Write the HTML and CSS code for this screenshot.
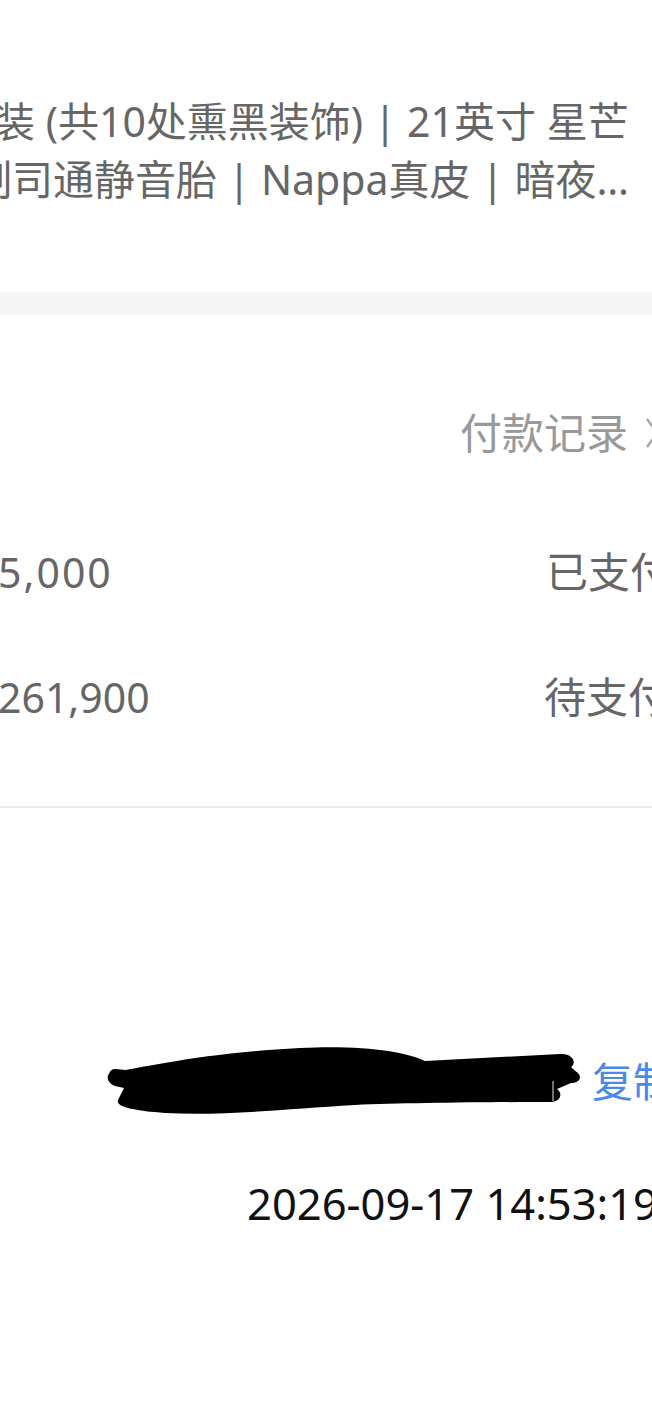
FILE: index.html
```html
<!DOCTYPE html>
<html lang="zh-CN">
<head>
<meta charset="utf-8">
<title>订单详情</title>
<link rel="stylesheet" href="styles.css">
</head>
<body>
<div class="page">
  <section class="desc">
    <div class="desc-line l1">装 (共10处熏黑装饰) | 21英寸 星芒</div>
    <div class="desc-line l2">制司通静音胎 | Nappa真皮 | 暗夜…</div>
  </section>

  <div class="band"></div>

  <section class="payments">
    <div class="record-row">
      <span class="record-link">付款记录</span>
      <svg class="chev" width="14" height="32" viewBox="0 0 14 32"><polyline points="2,2 12,16 2,30" fill="none" stroke="#a6a6a6" stroke-width="2.4"/></svg>
    </div>
    <div class="pay-row paid">
      <span class="amt">5,000</span>
      <span class="status">已支付</span>
    </div>
    <div class="pay-row pending">
      <span class="amt">261,900</span>
      <span class="status">待支付</span>
    </div>
  </section>

  <div class="divider"></div>

  <section class="order">
    <div class="copy-row">
      <svg class="redact" width="480" height="72" viewBox="0 0 480 72">
        <path d="M5,28 C40,22 100,8 195,3 C255,0 300,6 320,16 L455,9 C468,8 472,18 466,22 L470,26 C478,30 476,38 466,38 L452,44 C458,48 456,57 446,57 C380,57 300,58 250,60 C180,64 120,71 60,68 C30,66 10,62 13,55 L19,43 L10,41 C2,38 1,30 5,28 Z" fill="#000"/>
        <path d="M10,30 C80,38 300,33 466,30" stroke="#000" stroke-width="12" stroke-linecap="round" fill="none"/>
        <line x1="448" y1="36" x2="448" y2="56" stroke="#9a9a9a" stroke-width="1.5"/>
      </svg>
      <span class="copy">复制</span>
    </div>
    <div class="date">2026-09-17 14:53:19</div>
  </section>
</div>
</body>
</html>
```

FILE: styles.css
```css
html, body {
  margin: 0;
  padding: 0;
  background: #ffffff;
}
body {
  width: 652px;
  height: 1414px;
  overflow: hidden;
  font-family: "Noto Sans", "Noto Sans CJK SC", sans-serif;
}
.page {
  padding-top: 92px;
}
.desc {
  color: #666666;
  font-size: 41px;
  line-height: 58px;
}
.desc-line {
  white-space: nowrap;
}
.l1 {
  margin-left: -6px;
}
.l2 {
  margin-left: -29px;
}
.band {
  margin-top: 84px;
  height: 23px;
  background: #f5f5f5;
}
.payments {
  padding-top: 89px;
}
.record-row {
  display: flex;
  align-items: center;
  padding-left: 460px;
  height: 58px;
  white-space: nowrap;
}
.record-link {
  color: #999999;
  font-size: 42px;
  line-height: 58px;
}
.chev {
  margin-left: 17px;
  flex: none;
}
.pay-row {
  display: grid;
  grid-template-columns: 546px auto;
  font-size: 41px;
  line-height: 58px;
  color: #666666;
  white-space: nowrap;
}
.paid {
  margin-top: 81px;
}
.pending {
  margin-top: 67px;
}
.amt {
  margin-left: -2px;
}
.paid .amt {
  letter-spacing: 2px;
}
.status {
  font-size: 42px;
}
.pending .status {
  margin-left: -2px;
}
.divider {
  margin-top: 80px;
  height: 2px;
  background: #e9e9e9;
}
.order {
  padding-top: 237px;
}
.copy-row {
  display: flex;
  align-items: center;
  height: 72px;
  padding-left: 105px;
  white-space: nowrap;
}
.redact {
  flex: none;
}
.copy {
  margin-left: 7px;
  color: #4a8ae6;
  font-size: 41px;
  line-height: 58px;
}
.date {
  margin-top: 57px;
  padding-left: 247px;
  color: #111111;
  font-size: 43.5px;
  line-height: 58px;
  white-space: nowrap;
}
```
